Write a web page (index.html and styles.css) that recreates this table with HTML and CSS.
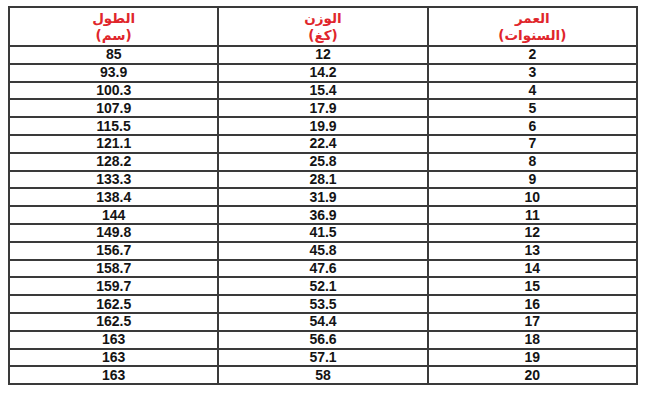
FILE: index.html
```html
<!DOCTYPE html>
<html lang="ar">
<head>
<meta charset="utf-8">
<link rel="stylesheet" href="styles.css">
</head>
<body>
<table class="growth" dir="rtl">
  <thead>
    <tr>
      <th>العمر<br>(السنوات)</th>
      <th>الوزن<br>(كغ)</th>
      <th>الطول<br>(سم)</th>
    </tr>
  </thead>
  <tbody>
    <tr><td>2</td><td>12</td><td>85</td></tr>
    <tr><td>3</td><td>14.2</td><td>93.9</td></tr>
    <tr><td>4</td><td>15.4</td><td>100.3</td></tr>
    <tr><td>5</td><td>17.9</td><td>107.9</td></tr>
    <tr><td>6</td><td>19.9</td><td>115.5</td></tr>
    <tr><td>7</td><td>22.4</td><td>121.1</td></tr>
    <tr><td>8</td><td>25.8</td><td>128.2</td></tr>
    <tr><td>9</td><td>28.1</td><td>133.3</td></tr>
    <tr><td>10</td><td>31.9</td><td>138.4</td></tr>
    <tr><td>11</td><td>36.9</td><td>144</td></tr>
    <tr><td>12</td><td>41.5</td><td>149.8</td></tr>
    <tr><td>13</td><td>45.8</td><td>156.7</td></tr>
    <tr><td>14</td><td>47.6</td><td>158.7</td></tr>
    <tr><td>15</td><td>52.1</td><td>159.7</td></tr>
    <tr><td>16</td><td>53.5</td><td>162.5</td></tr>
    <tr><td>17</td><td>54.4</td><td>162.5</td></tr>
    <tr><td>18</td><td>56.6</td><td>163</td></tr>
    <tr><td>19</td><td>57.1</td><td>163</td></tr>
    <tr><td>20</td><td>58</td><td>163</td></tr>
  </tbody>
</table>
</body>
</html>
```
FILE: styles.css
```css
html, body {
  background: #ffffff;
}
body {
  margin: 6px 0 0 8px;
}
.growth {
  width: 630px;
  border-collapse: collapse;
  table-layout: fixed;
  font-family: "Liberation Sans", Arial, sans-serif;
  font-weight: bold;
  font-size: 14px;
  color: #141414;
}
.growth th,
.growth td {
  border: 2px solid #3a3a3a;
  padding: 0;
  text-align: center;
  vertical-align: middle;
}
.growth th {
  height: 37px;
  font-family: "DejaVu Sans", sans-serif;
  font-size: 13.5px;
  line-height: 17px;
  color: #e0262c;
}
.growth td {
  height: 15.8px;
  line-height: 15px;
}
```
